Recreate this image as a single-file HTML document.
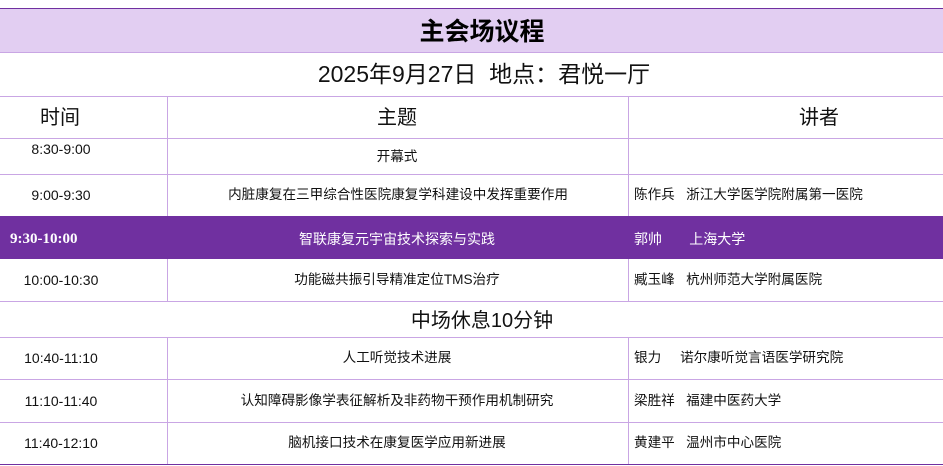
<!DOCTYPE html>
<html><head><meta charset="utf-8"><style>
*{margin:0;padding:0;box-sizing:border-box}
body{width:943px;height:466px;background:#fff;position:relative;overflow:hidden;font-family:"Liberation Sans","Noto Sans CJK SC",sans-serif;color:#111}
.a{position:absolute;white-space:nowrap;line-height:1}
.h{position:absolute;left:0;width:943px;height:1px;background:#c9a6e4}
.v{position:absolute;width:1px;background:#c9a6e4}
.c{transform:translateX(-50%)}
.t{font-size:14px}
.s{font-size:13.6px}
</style></head><body>
<div class="a" style="left:0;top:8px;width:943px;height:44px;background:#e2cef2"></div>
<div style="position:absolute;left:0;top:8px;width:943px;height:1px;background:#7030a0"></div>
<div class="a c" style="left:482px;top:20px;font-size:25px;font-weight:bold;color:#000">主会场议程</div>
<div class="h" style="top:52px"></div>
<div class="a c" style="left:484px;top:63px;font-size:23px">2025年9月27日&nbsp; 地点：君悦一厅</div>
<div class="h" style="top:96px"></div>
<div class="a c" style="left:60px;top:108px;font-size:20px">时间</div>
<div class="a c" style="left:397px;top:108px;font-size:20px">主题</div>
<div class="a c" style="left:819px;top:108px;font-size:20px">讲者</div>
<div class="h" style="top:138px"></div>
<div class="a c t" style="left:61px;top:142px">8:30-9:00</div>
<div class="a c s" style="left:397px;top:150px">开幕式</div>
<div class="h" style="top:174px"></div>
<div class="a c t" style="left:61px;top:188px">9:00-9:30</div>
<div class="a c s" style="left:398px;top:188px">内脏康复在三甲综合性医院康复学科建设中发挥重要作用</div>
<div class="a s" style="left:634px;top:188px">陈作兵&nbsp;&nbsp;&nbsp;浙江大学医学院附属第一医院</div>
<div class="a" style="left:0;top:216px;width:943px;height:43px;background:#7030a0"></div>
<div class="a" style="left:10px;top:232px;font-size:15px;font-weight:bold;color:#fff;font-family:'Liberation Serif',serif">9:30-10:00</div>
<div class="a c" style="left:397px;top:232px;font-size:14px;color:#fff">智联康复元宇宙技术探索与实践</div>
<div class="a" style="left:634px;top:232px;font-size:14px;color:#fff">郭帅&nbsp;&nbsp;&nbsp;&nbsp;&nbsp;&nbsp;&nbsp;上海大学</div>
<div class="a c t" style="left:61px;top:273px">10:00-10:30</div>
<div class="a c s" style="left:397px;top:273px">功能磁共振引导精准定位TMS治疗</div>
<div class="a s" style="left:634px;top:273px">臧玉峰&nbsp;&nbsp;&nbsp;杭州师范大学附属医院</div>
<div class="h" style="top:301px"></div>
<div class="a c" style="left:482px;top:311px;font-size:20px">中场休息10分钟</div>
<div class="h" style="top:337px"></div>
<div class="a c t" style="left:61px;top:351px">10:40-11:10</div>
<div class="a c s" style="left:397px;top:351px">人工听觉技术进展</div>
<div class="a s" style="left:634px;top:351px">银力&nbsp;&nbsp;&nbsp;&nbsp;&nbsp;诺尔康听觉言语医学研究院</div>
<div class="h" style="top:379px"></div>
<div class="a c t" style="left:61px;top:394px">11:10-11:40</div>
<div class="a c s" style="left:397px;top:394px">认知障碍影像学表征解析及非药物干预作用机制研究</div>
<div class="a s" style="left:634px;top:394px">梁胜祥&nbsp;&nbsp;&nbsp;福建中医药大学</div>
<div class="h" style="top:422px"></div>
<div class="a c t" style="left:61px;top:436px">11:40-12:10</div>
<div class="a c s" style="left:397px;top:436px">脑机接口技术在康复医学应用新进展</div>
<div class="a s" style="left:634px;top:436px">黄建平&nbsp;&nbsp;&nbsp;温州市中心医院</div>
<div style="position:absolute;left:0;top:464px;width:943px;height:1px;background:#7030a0"></div>
<div class="v" style="left:167px;top:96px;height:42px"></div>
<div class="v" style="left:628px;top:96px;height:42px"></div>
<div class="v" style="left:167px;top:138px;height:78px"></div>
<div class="v" style="left:628px;top:138px;height:78px"></div>
<div class="v" style="left:167px;top:259px;height:42px"></div>
<div class="v" style="left:628px;top:259px;height:42px"></div>
<div class="v" style="left:167px;top:337px;height:127px"></div>
<div class="v" style="left:628px;top:337px;height:127px"></div>
</body></html>
